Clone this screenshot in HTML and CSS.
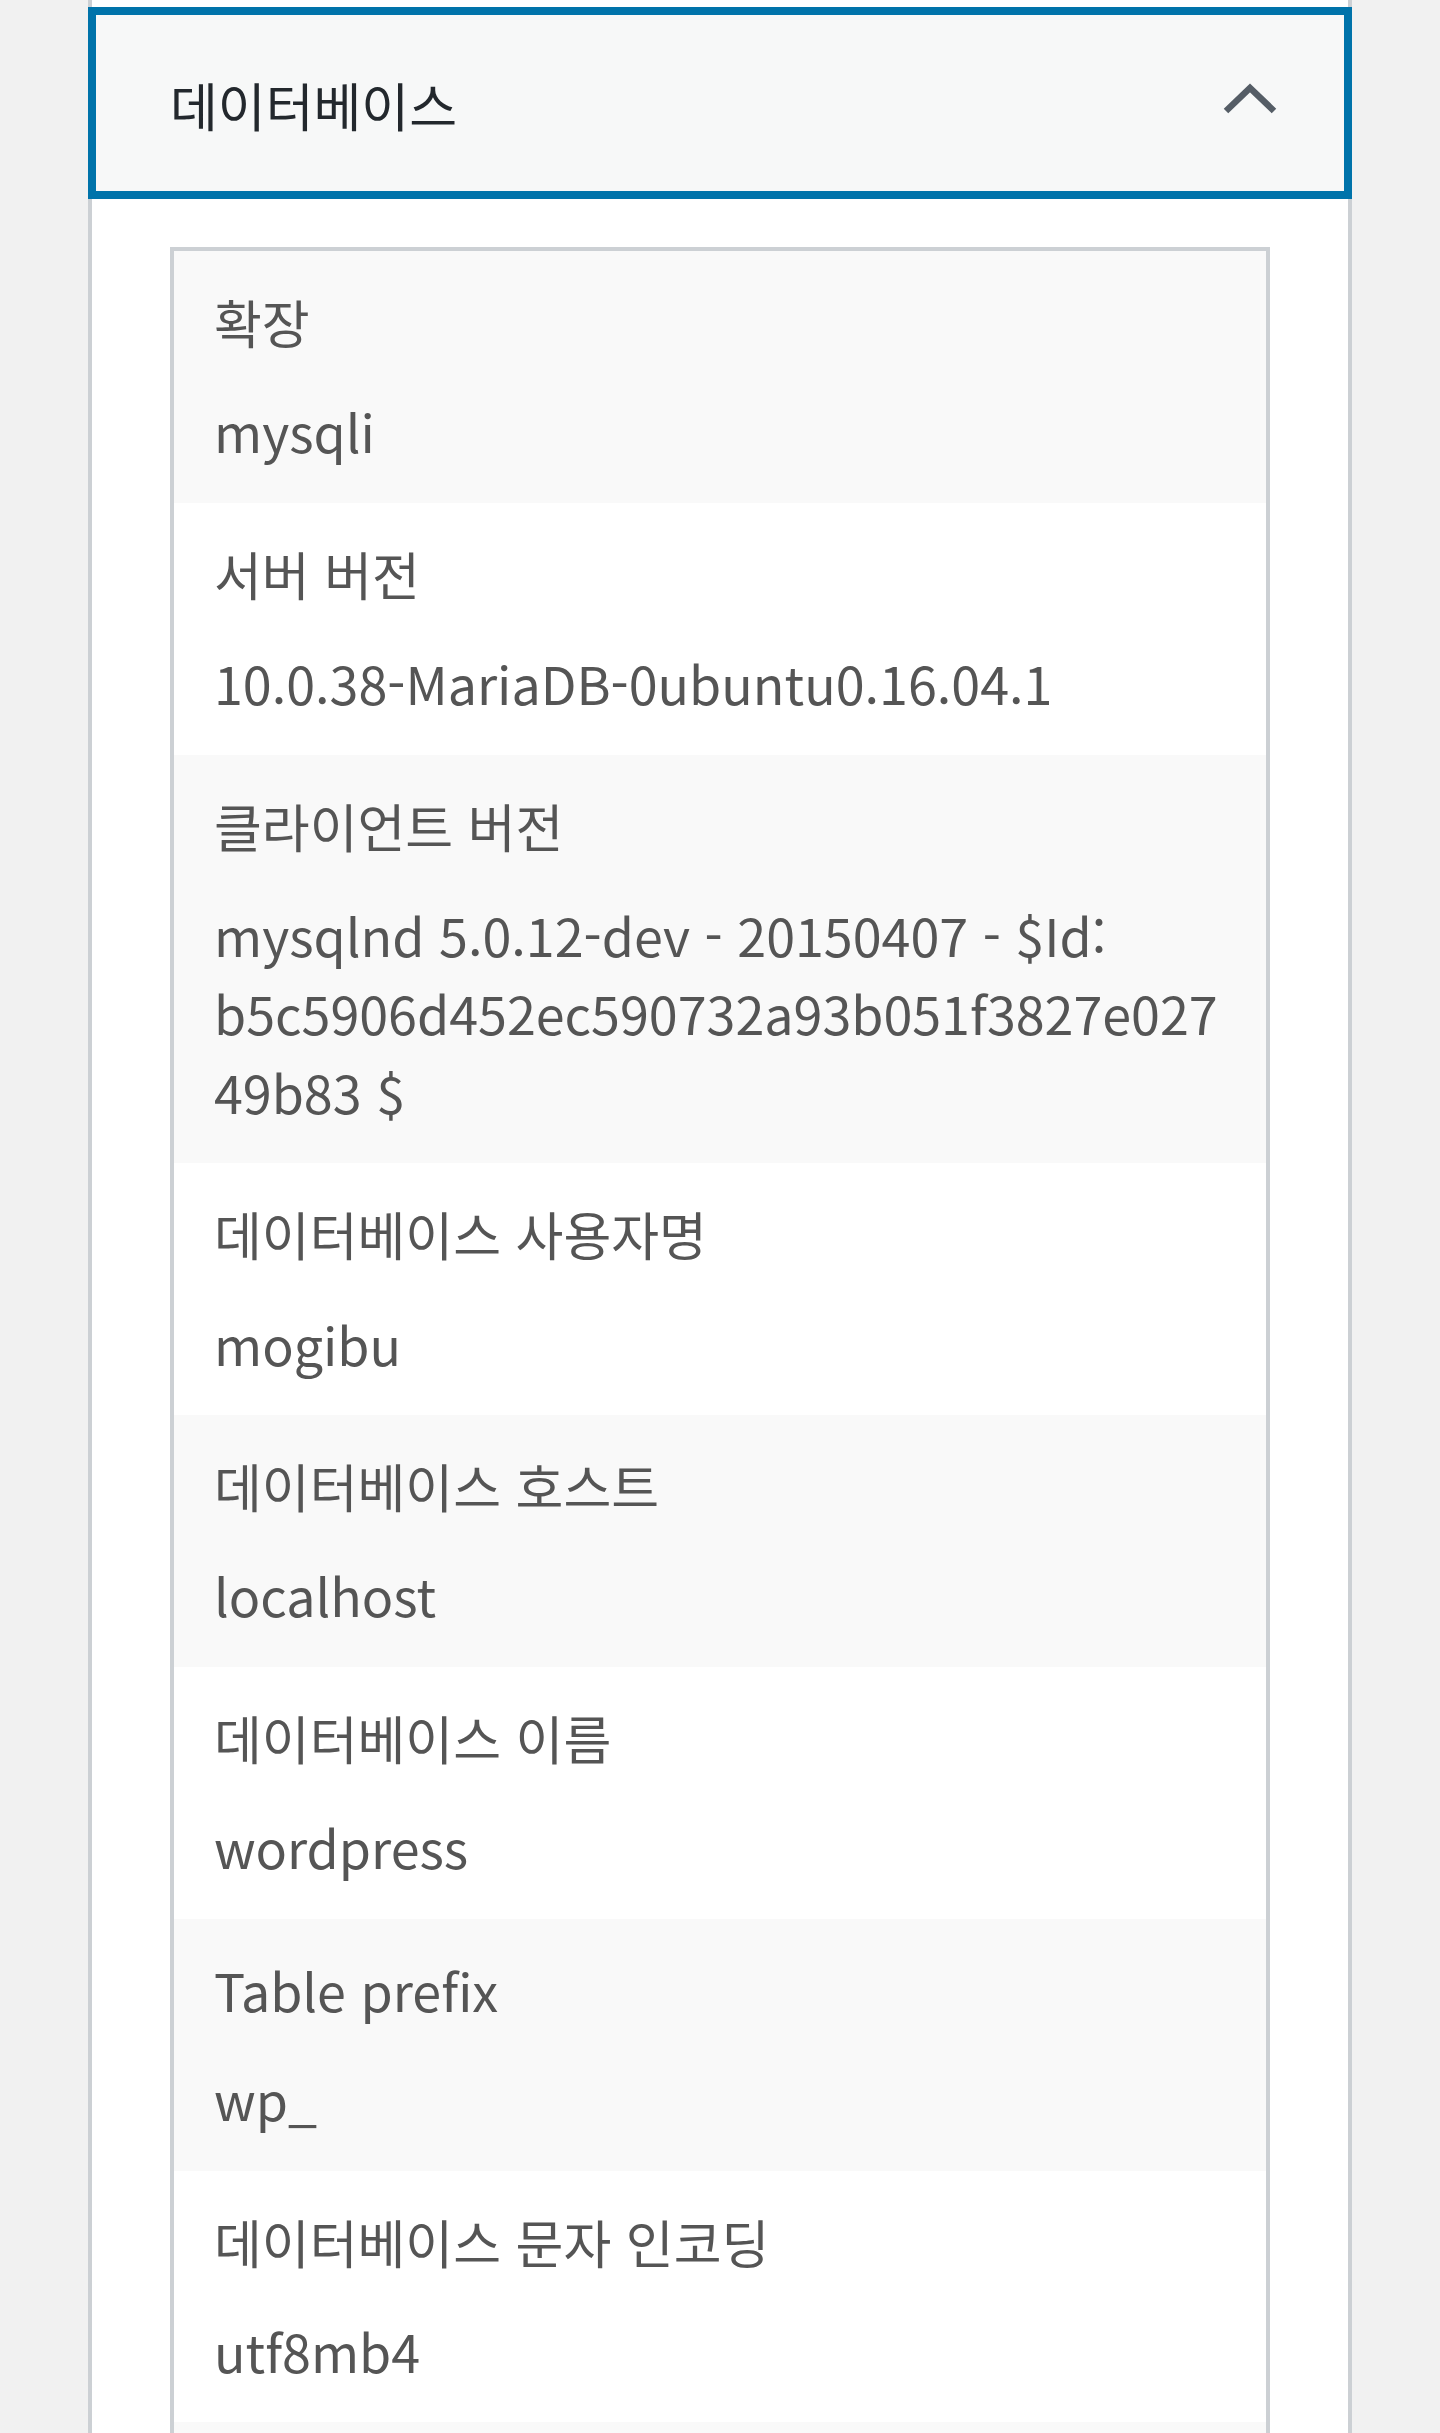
FILE: index.html
```html
<!doctype html>
<html lang="ko">
  <head>
    <meta charset="UTF-8" />
    <meta name="viewport" content="width=device-width, initial-scale=1.0" />
    <title>사이트 건강 정보 - 데이터베이스</title>
    <link rel="stylesheet" href="styles.css">
  </head>
  <body>
    <div class="accordion">
      <h3 class="accordion-heading">
        <button class="accordion-trigger" aria-expanded="true">
          <span class="accordion-title">데이터베이스</span>
          <svg class="accordion-icon" width="60" height="40" viewBox="0 0 60 40" aria-hidden="true">
            <polyline points="6,28 30,5 54,28" />
          </svg>
        </button>
      </h3>

      <div class="accordion-panel">
        <table class="info-table">
          <tbody>
            <tr>
              <td class="info-label">확장</td>
              <td class="info-value">mysqli</td>
            </tr>
            <tr>
              <td class="info-label">서버 버전</td>
              <td class="info-value">10.0.38-MariaDB-0ubuntu0.16.04.1</td>
            </tr>
            <tr>
              <td class="info-label">클라이언트 버전</td>
              <td class="info-value">mysqlnd 5.0.12-dev - 20150407 - $Id:<br>b5c5906d452ec590732a93b051f3827e027<br>49b83 $</td>
            </tr>
            <tr>
              <td class="info-label">데이터베이스 사용자명</td>
              <td class="info-value">mogibu</td>
            </tr>
            <tr>
              <td class="info-label">데이터베이스 호스트</td>
              <td class="info-value">localhost</td>
            </tr>
            <tr>
              <td class="info-label">데이터베이스 이름</td>
              <td class="info-value">wordpress</td>
            </tr>
            <tr>
              <td class="info-label">Table prefix</td>
              <td class="info-value">wp_</td>
            </tr>
            <tr>
              <td class="info-label">데이터베이스 문자 인코딩</td>
              <td class="info-value">utf8mb4</td>
            </tr>
            <tr>
              <td class="info-label">데이터베이스 콜레이션</td>
              <td class="info-value">utf8mb4_unicode_ci</td>
            </tr>
          </tbody>
        </table>
      </div>
    </div>
  </body>
</html>
```

FILE: styles.css
```css
* {
  margin: 0;
  padding: 0;
  box-sizing: border-box;
}

body {
  font-family: "Noto Sans CJK KR", "Noto Sans", sans-serif;
  font-size: 52px;
  line-height: 78.4px;
  background: #f1f1f1;
  color: #555;
}

.accordion {
  width: 1264px;
  margin-left: 88px;
  padding-top: 7px;
  background: #fff;
  border-left: 4px solid #ccd0d4;
  border-right: 4px solid #ccd0d4;
}

.accordion-heading {
  font-size: inherit;
  font-weight: 400;
  margin: 0 -4px;
}

.accordion-trigger {
  display: flex;
  align-items: center;
  justify-content: space-between;
  width: 100%;
  height: 192px;
  padding: 0 64px 0 74px;
  background: #f7f8f8;
  border: 8px solid #0073aa;
  font: inherit;
  color: #23282d;
  text-align: left;
  cursor: pointer;
}

.accordion-title {
  padding-top: 4px;
}

.accordion-icon {
  flex-shrink: 0;
}

.accordion-icon polyline {
  fill: none;
  stroke: #555d66;
  stroke-width: 6.5;
}

.accordion-panel {
  padding: 48px 78px 0;
}

.info-table {
  display: block;
  width: 100%;
  border: 4px solid #ccd0d4;
  border-collapse: collapse;
}

.info-table tbody,
.info-table tr,
.info-table td {
  display: block;
}

.info-table tr:nth-child(odd) {
  background: #f9f9f9;
}

.info-label {
  padding: 32px 40px 0;
}

.info-value {
  padding: 31px 40px 32px;
}
```
